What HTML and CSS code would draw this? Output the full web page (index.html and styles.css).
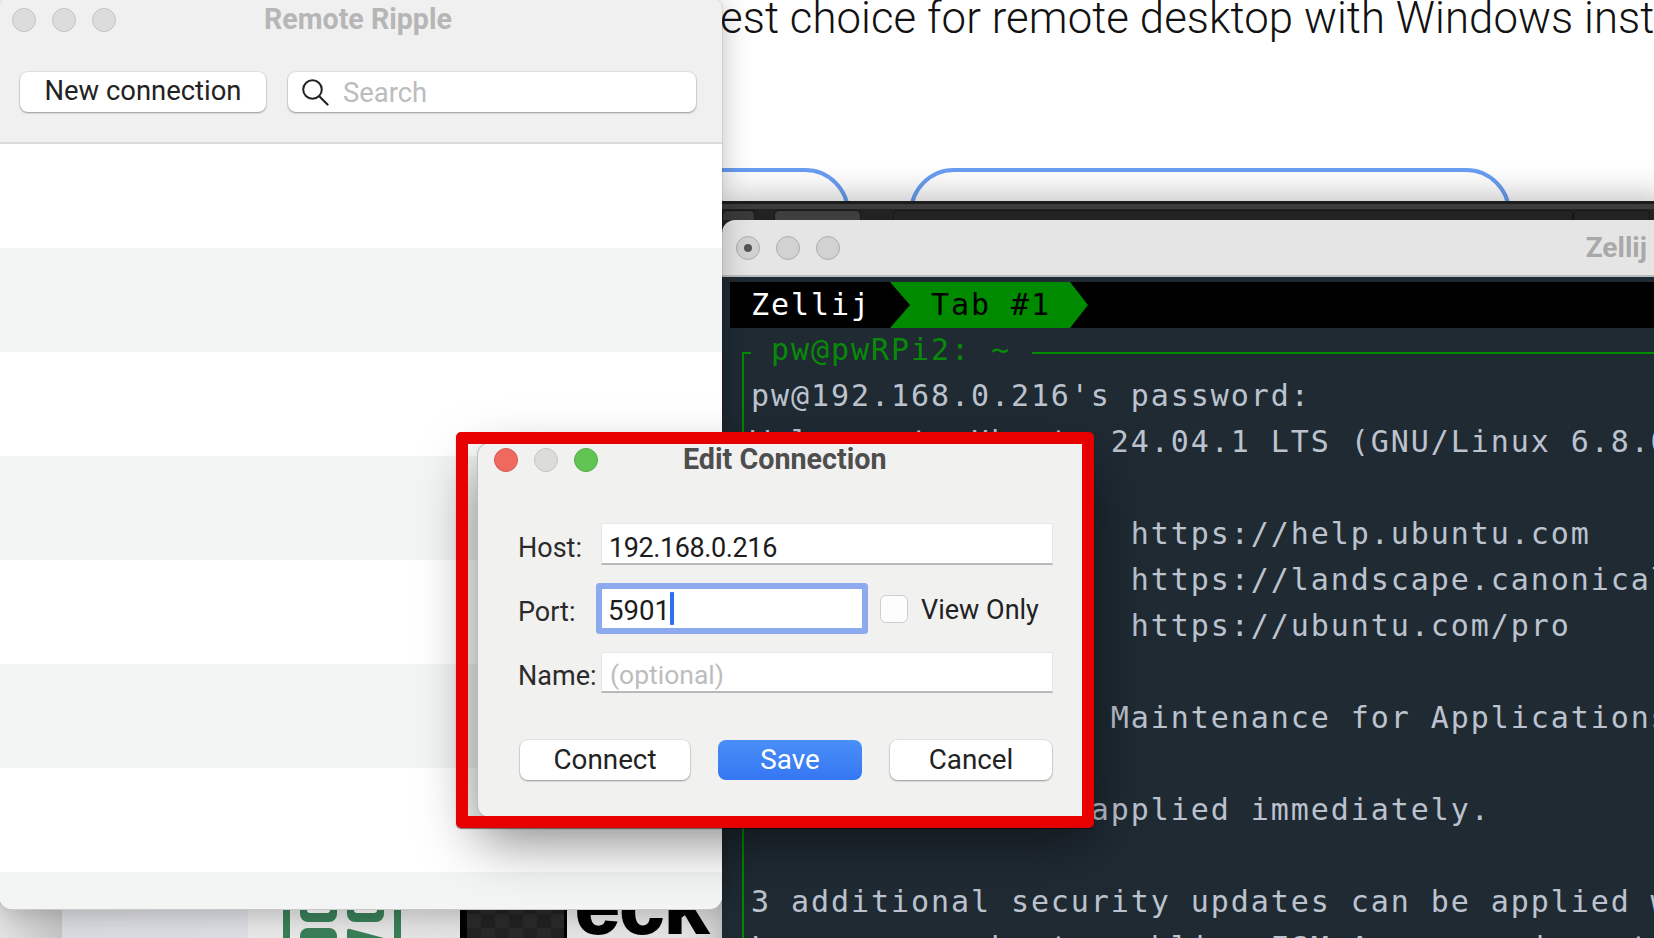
FILE: index.html
```html
<!DOCTYPE html>
<html lang="en">
<head>
<meta charset="utf-8">
<title>Edit Connection</title>
<link rel="stylesheet" href="styles.css">
</head>
<body>
<div class="desktop">

  <section class="page">
    <h1 class="page-title">The best choice for remote desktop with Windows installed</h1>
    <div class="pill pill-a"></div>
    <div class="pill pill-b"></div>
    <div class="thumbs">
      <div class="thumb-a"></div>
      <div class="thumb-b">
        <svg class="green-logo" width="118" height="38" viewBox="0 0 118 38">
          <rect x="0" y="0" width="7" height="38" fill="#3a7f58"/>
          <rect x="111" y="0" width="7" height="38" fill="#3a7f58"/>
          <path d="M17 0h37v14a8 8 0 0 1-8 8H25a8 8 0 0 1-8-8z" fill="#3a7f58"/>
          <path d="M64 0h37v14a8 8 0 0 1-8 8H72a8 8 0 0 1-8-8z" fill="#3a7f58"/>
          <rect x="24" y="0" width="23" height="13" rx="3" fill="#fff"/>
          <rect x="71" y="0" width="23" height="13" rx="3" fill="#fff"/>
          <path d="M17 38v-2a8 8 0 0 1 8-8h21a8 8 0 0 1 8 8v2z" fill="#3a7f58"/>
          <path d="M64 38V31q0-3 3-2l34 9z" fill="#3a7f58"/>
        </svg>
      </div>
      <div class="thumb-c">
        <div class="checker"></div>
        <span class="big-word">eck</span>
      </div>
    </div>
  </section>

  <section class="term-window">
    <div class="term-strip">
      <div class="strip-tab strip-tab-a"></div>
      <div class="strip-tab strip-tab-b"></div>
      <div class="strip-tab strip-tab-c"></div>
      <div class="strip-tab strip-tab-d"></div>
    </div>
    <div class="zellij">
      <header class="zellij-bar">
        <div class="lights">
          <span class="light light-off light-dot"></span>
          <span class="light light-off"></span>
          <span class="light light-off"></span>
        </div>
        <span class="zellij-title">Zellij</span>
      </header>
      <div class="terminal">
        <div class="tabbar">
          <span class="tab-name">Zellij</span>
          <span class="tab-active">Tab #1</span>
        </div>
        <div class="pane-title">
          <span class="pane-corner"></span>
          <span class="pane-name">pw@pwRPi2: ~</span>
          <span class="pane-rule"></span>
        </div>
        <pre class="pane-body">pw@192.168.0.216's password:
Welcome to Ubuntu 24.04.1 LTS (GNU/Linux 6.8.0-1018-raspi aarch64)

 * Documentation:  https://help.ubuntu.com
 * Management:     https://landscape.canonical.com
 * Support:        https://ubuntu.com/pro

Expanded Security Maintenance for Applications is not enabled.

0 updates can be applied immediately.

3 additional security updates can be applied with ESM Apps.
Learn more about enabling ESM Apps service at https://ubuntu.com/esm</pre>
      </div>
    </div>
  </section>

  <section class="ripple">
    <header class="ripple-title">
      <div class="lights">
        <span class="light light-idle"></span>
        <span class="light light-idle"></span>
        <span class="light light-idle"></span>
      </div>
      <span class="ripple-name">Remote Ripple</span>
    </header>
    <div class="ripple-tools">
      <button class="btn btn-new">New connection</button>
      <div class="search">
        <svg class="search-icon" width="27" height="27" viewBox="0 0 27 27">
          <circle cx="10.5" cy="10.5" r="9.3" fill="none" stroke="#222" stroke-width="2"/>
          <path d="M17.5 17.5l8 8" fill="none" stroke="#222" stroke-width="2.2" stroke-linecap="round"/>
        </svg>
        <span class="search-text">Search</span>
      </div>
    </div>
    <div class="rows">
      <div class="row"></div>
      <div class="row row-alt"></div>
      <div class="row"></div>
      <div class="row row-alt"></div>
      <div class="row"></div>
      <div class="row row-alt"></div>
      <div class="row"></div>
      <div class="row row-alt row-last"></div>
    </div>
  </section>

  <section class="dialog">
    <header class="dialog-title">
      <div class="lights">
        <span class="light light-red"></span>
        <span class="light light-gray"></span>
        <span class="light light-green"></span>
      </div>
      <span class="dialog-name">Edit Connection</span>
    </header>
    <div class="form">
      <div class="form-row">
        <span class="label">Host:</span>
        <div class="field field-host">192.168.0.216</div>
      </div>
      <div class="form-row">
        <span class="label">Port:</span>
        <div class="field field-focus">5901<span class="caret"></span></div>
        <span class="checkbox"></span>
        <span class="check-label">View Only</span>
      </div>
      <div class="form-row">
        <span class="label">Name:</span>
        <div class="field field-hint">(optional)</div>
      </div>
      <div class="actions">
        <button class="btn btn-connect">Connect</button>
        <button class="btn btn-save">Save</button>
        <button class="btn btn-cancel">Cancel</button>
      </div>
    </div>
  </section>

  <div class="red-frame"></div>
</div>
</body>
</html>
```
FILE: styles.css
```css
* { box-sizing: border-box; }

html, body {
  margin: 0;
  padding: 0;
  background: #fff;
}

.desktop {
  position: relative;
  width: 1654px;
  height: 938px;
  overflow: hidden;
  background: #fff;
  font-family: Roboto, "Liberation Sans", sans-serif;
}

/* page behind the windows */
.page {
  position: absolute;
  inset: 0;
  overflow: hidden;
}

.page-title {
  position: absolute;
  left: 612px;
  top: -12px;
  margin: 0;
  font-size: 43.7px;
  line-height: 60px;
  font-weight: 300;
  letter-spacing: .09px;
  color: #111;
  white-space: nowrap;
}

.pill {
  position: absolute;
  top: 168px;
  height: 90px;
  border: 4px solid #699ef3;
  border-radius: 48px;
}
.pill-a { left: 560px; width: 290px; }
.pill-b { left: 909px; width: 602px; }

.thumbs {
  position: absolute;
  left: 0;
  right: 0;
  bottom: 0;
  height: 38px;
  display: flex;
}
.thumb-a {
  width: 62px;
  background: linear-gradient(90deg, #e4e4e4, #c6c6c6);
}
.thumb-b {
  width: 398px;
  flex: none;
  padding-left: 221px;
  background: linear-gradient(90deg, #dcdde2 0, #dfe0e6 186px, #eaeaea 186px, #e4e4e4 100%);
}
.green-logo { display: block; }
.thumb-c {
  flex: 1;
  display: flex;
  align-items: flex-start;
  overflow: hidden;
  background: #e6e6e6;
}
.checker {
  flex: none;
  width: 107px;
  height: 38px;
  border-left: 7px solid #000;
  border-right: 3px solid #000;
  background: repeating-conic-gradient(#2a2a2a 0 25%, #222 0 50%) 0 0 / 28px 28px;
}
.big-word {
  margin: -13px 0 0 8px;
  font-family: "Liberation Sans", sans-serif;
  font-size: 80px;
  line-height: 38px;
  font-weight: 700;
  color: #000;
  -webkit-text-stroke: 2px #000;
}

/* terminal window */
.term-window {
  position: absolute;
  left: 722px;
  top: 201px;
  width: 950px;
  height: 760px;
  background: #222;
  box-shadow: 0 0 36px rgba(0, 0, 0, .32);
}
.term-strip {
  height: 19px;
  display: flex;
  align-items: flex-start;
  padding-top: 9px;
  background: linear-gradient(#1c1c1c 0 3px, #3c3c3c 3px 8px, #222 8px);
}
.strip-tab {
  height: 10px;
  border: 1px solid #161616;
  border-bottom: 0;
  border-radius: 5px 5px 0 0;
}
.strip-tab-a { width: 33px; background: #3a3a3a; }
.strip-tab-b { width: 87px; margin-left: 19px; background: #3e3e3e; }
.strip-tab-c { width: 680px; margin-left: 32px; background: #232323; }
.strip-tab-d { width: 77px; background: #232323; border-left: 1px solid #111; }

.zellij {
  border-radius: 13px 0 0 0;
  overflow: hidden;
  height: 741px;
  background: #1f2a33;
}
.zellij-bar {
  width: 932px;
  height: 57px;
  padding: 0 7px 0 14px;
  display: flex;
  align-items: center;
  justify-content: space-between;
  background: #e5e5e5;
  border-bottom: 2px solid #bcbcbc;
}
.zellij-title {
  font-size: 28px;
  font-weight: 700;
  color: #a9a9a9;
  white-space: nowrap;
}

.lights {
  display: flex;
  flex: none;
  gap: 16px;
}
.light {
  width: 24px;
  height: 24px;
  border-radius: 50%;
  flex: none;
}
.light-off { background: #d2d2d2; border: 1px solid #acacac; position: relative; }
.light-dot::after {
  content: "";
  position: absolute;
  left: 7px;
  top: 7px;
  width: 8px;
  height: 8px;
  border-radius: 50%;
  background: #555;
}
.light-idle { background: #dcdcdc; border: 1px solid #c4c4c4; }
.light-red { background: #ee6a5f; border: 1px solid #d85a50; }
.light-gray { background: #dcdcdb; border: 1px solid #c6c6c5; }
.light-green { background: #61c554; border: 1px solid #52ad46; }

.terminal {
  padding: 5px 0 0 8px;
  font-family: "DejaVu Sans Mono", "Liberation Mono", monospace;
  font-size: 30px;
  line-height: 46px;
  letter-spacing: 1.93px;
  color: #bcc2ce;
}
.tabbar {
  height: 46px;
  display: flex;
  background: #000;
}
.tab-name {
  width: 160px;
  padding-left: 21px;
  color: #fff;
}
.tab-active {
  width: 198px;
  padding-left: 41px;
  color: #000;
  background: #008a00;
  clip-path: polygon(0 0, 180px 0, 100% 50%, 180px 100%, 0 100%, 20px 50%);
}
.pane-title {
  margin: -2px 0 0 12px;
  height: 47px;
  display: flex;
  align-items: flex-start;
  color: #088a08;
}
.pane-corner {
  flex: none;
  width: 9px;
  height: 21px;
  margin-top: 26px;
  border-left: 2px solid #008a00;
  border-top: 2px solid #008a00;
}
.pane-name {
  margin-left: 20px;
  padding-top: 1px;
  white-space: pre;
}
.pane-rule {
  flex: 1;
  height: 2px;
  margin: 26px 0 0 21px;
  background: #008a00;
}
.pane-body {
  margin: 0 0 0 12px;
  padding-left: 7px;
  border-left: 2px solid #008a00;
  font: inherit;
  letter-spacing: inherit;
  white-space: pre;
}

/* Remote Ripple window */
.ripple {
  position: absolute;
  left: -1px;
  top: -4px;
  width: 723px;
  height: 913px;
  display: flex;
  flex-direction: column;
  overflow: hidden;
  border-radius: 13px;
  background: #f0f0f0;
  box-shadow: 0 1px 0 #c8c8c8, 0 0 0 1px rgba(0,0,0,.08), 0 4px 30px rgba(0, 0, 0, .26);
}
.ripple-title {
  height: 48px;
  flex: none;
  padding: 12px 0 0 13px;
  display: flex;
}
.ripple-name {
  margin-left: 148px;
  font-size: 28.6px;
  line-height: 22px;
  font-weight: 700;
  color: #b6b6b6;
  white-space: nowrap;
}
.ripple-tools {
  flex: none;
  height: 100px;
  padding: 28px 26px 0 21px;
  display: flex;
  gap: 22px;
  align-items: flex-start;
  border-bottom: 2px solid #dadada;
}
.btn {
  height: 40px;
  padding: 0 0 2px;
  border: 0;
  border-radius: 8px;
  font-family: inherit;
  font-size: 27.4px;
  line-height: 36px;
  color: #222;
  background: #fff;
  box-shadow: 0 1px 2px rgba(0, 0, 0, .35), 0 0 0 1px rgba(0, 0, 0, .05);
}
.btn-new { width: 246px; flex: none; }
.search {
  flex: 1;
  height: 40px;
  display: flex;
  align-items: center;
  padding: 0 0 0 14px;
  background: #fff;
  border-radius: 8px;
  box-shadow: 0 1px 2px rgba(0, 0, 0, .35), 0 0 0 1px rgba(0, 0, 0, .05);
}
.search-text {
  margin: 2px 0 0 14px;
  font-size: 27.4px;
  color: #bcbcbc;
}
.rows {
  flex: 1;
  display: flex;
  flex-direction: column;
}
.row {
  height: 104px;
  flex: none;
  background: #fff;
}
.row-alt { background: #f3f5f4; }
.row-last { flex: 1; }

/* Edit Connection dialog */
.dialog {
  position: absolute;
  left: 478px;
  top: 443px;
  width: 614px;
  height: 374px;
  border-radius: 12px;
  background: #f1f1f0;
  box-shadow: 0 0 0 1px #bdbdbd, 0 22px 56px rgba(0, 0, 0, .5);
}
.dialog-title {
  height: 80px;
  padding: 5px 0 0 16px;
  display: flex;
}
.dialog-name {
  margin-left: 85px;
  font-size: 28.7px;
  line-height: 22px;
  font-weight: 700;
  color: #4e4e4e;
  white-space: nowrap;
}
.form {
  padding-left: 40px;
  width: 575px;
  font-size: 27px;
  color: #222;
}
.form-row {
  height: 42px;
  margin-bottom: 22.5px;
  display: flex;
  align-items: center;
}
.form-row:nth-child(3) { margin-bottom: 0; height: 41px; }
.label { width: 84px; flex: none; padding-top: 7px; color: #2b2b2b; }
.field {
  flex: 1;
  height: 100%;
  margin-left: -1px;
  padding: 2px 0 0 7px;
  line-height: 44px;
  background: #fff;
  border: 1px solid #e6e6e6;
  border-bottom: 2px solid #b9b9b9;
  color: #1c1c1c;
  white-space: nowrap;
}
.field-host { letter-spacing: -.4px; }
.field-focus {
  flex: none;
  width: 260px;
  height: 39px;
  margin-left: 0;
  padding: 0 0 0 6px;
  line-height: 43px;
  font-size: 27.6px;
  border: 0;
  border-radius: 1px;
  display: flex;
  box-shadow: 0 0 0 6px #8eaaee;
}
.caret {
  display: block;
  width: 4px;
  height: 33px;
  margin: 3px 0 0 0;
  border-radius: 1px;
  background: #2e6ff0;
}
.field-hint {
  padding-left: 8px;
  line-height: 39px;
  font-size: 26.5px;
  color: #bdbdbd;
}
.checkbox {
  width: 28px;
  height: 28px;
  margin-left: 18px;
  flex: none;
  border: 1px solid #cfcfcf;
  border-radius: 6px;
  background: #fdfdfd;
}
.check-label { margin-left: 13px; padding-top: 3px; white-space: nowrap; }
.actions {
  margin: 47px 0 0 2px;
  display: flex;
  gap: 28px;
}
.actions .btn {
  padding: 0;
  font-size: 27.8px;
}
.btn-connect { width: 170px; }
.actions .btn-save {
  width: 144px;
  color: #fff;
  background: linear-gradient(#4a8ff8, #3576f2);
  box-shadow: none;
}
.btn-cancel { width: 162px; }

/* red annotation around the dialog */
.red-frame {
  position: absolute;
  left: 456px;
  top: 432px;
  width: 638px;
  height: 396px;
  border: 12px solid #e60000;
  border-radius: 5px;
  box-shadow: 0 1px 1px rgba(0, 0, 0, .5);
}
```
